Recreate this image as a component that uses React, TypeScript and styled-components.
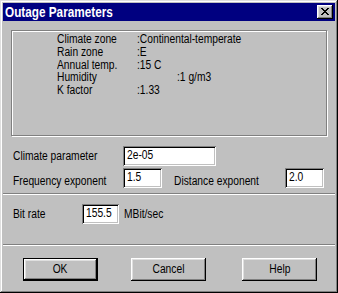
import React from "react";
import styled, { createGlobalStyle, css } from "styled-components";

const GlobalStyle = createGlobalStyle`
  html, body { margin: 0; padding: 0; background: #c0c0c0; }
  body {
    font-family: "Liberation Sans", Arial, sans-serif;
    font-size: 12.5px;
    color: #000;
  }
  * { box-sizing: border-box; }
`;

const narrow = css`
  display: inline-block;
  white-space: nowrap;
  transform: scaleX(0.82);
  transform-origin: 0 50%;
`;

const Window = styled.div`
  width: 338px;
  height: 293px;
  background: #c0c0c0;
  padding: 3px;
  display: flex;
  flex-direction: column;
  box-shadow: inset -1px -1px #000, inset 1px 1px #dfdfdf, inset -2px -2px #808080, inset 2px 2px #fff;
`;

const TitleBar = styled.div`
  height: 18px;
  background: #000080;
  display: flex;
  align-items: center;
  justify-content: space-between;
  padding: 0 2px 0 2px;
`;

const TitleText = styled.span`
  ${narrow};
  transform: scaleX(0.84);
  color: #fff;
  font-weight: bold;
  font-size: 14px;
  line-height: 18px;
`;

const CloseButton = styled.div`
  width: 16px;
  height: 14px;
  background: #c0c0c0;
  display: flex;
  align-items: center;
  justify-content: center;
  box-shadow: inset -1px -1px #000, inset 1px 1px #fff, inset -2px -2px #808080, inset 2px 2px #dfdfdf;
  padding-bottom: 1px;
`;

const GroupBox = styled.div`
  margin: 9px 0 0 8px;
  width: 316px;
  height: 106px;
  border: 1px solid #808080;
  box-shadow: inset 1px 1px #fff, 1px 1px #fff;
  padding: 2px 0 0 45px;
  display: grid;
  grid-template-columns: 80px auto;
  grid-auto-rows: 12.8px;
  line-height: 13px;
  align-content: start;
`;

const InfoLabel = styled.span`
  ${narrow};
`;

const InfoValue = styled.span<{ $indent?: number }>`
  ${narrow};
  margin-left: ${(p) => p.$indent ?? 0}px;
`;

const FieldRow = styled.div<{ $top: number }>`
  display: flex;
  align-items: flex-start;
  margin-top: ${(p) => p.$top}px;
  padding-left: 10px;
  height: 20px;
`;

const FieldLabel = styled.span<{ $width: number; $offset: number }>`
  width: ${(p) => p.$width}px;
  margin-top: ${(p) => p.$offset}px;
  line-height: 13px;
  flex: none;
`;

const LabelText = styled.span`
  ${narrow};
`;

const Unit = styled.span<{ $offset: number }>`
  ${narrow};
  margin-left: 5px;
  margin-top: ${(p) => p.$offset}px;
  line-height: 13px;
`;

const TextField = styled.div<{ $width: number }>`
  width: ${(p) => p.$width}px;
  height: 20px;
  background: #fff;
  flex: none;
  padding: 3px 0 0 4px;
  line-height: 13px;
  box-shadow: inset 1px 1px #808080, inset -1px -1px #fff, inset 2px 2px #000, inset -2px -2px #c0c0c0;
`;

const Spacer = styled.span<{ $w: number }>`
  width: ${(p) => p.$w}px;
  flex: none;
`;

const Separator = styled.div<{ $top: number }>`
  margin-top: ${(p) => p.$top}px;
  height: 2px;
  border-top: 1px solid #808080;
  border-bottom: 1px solid #fff;
`;

const ButtonRow = styled.div`
  display: flex;
  margin-top: 12px;
  padding-left: 20px;
`;

const Button = styled.div<{ $default?: boolean; $gap?: number }>`
  width: 75px;
  height: 23px;
  margin-left: ${(p) => p.$gap ?? 0}px;
  display: flex;
  align-items: center;
  justify-content: center;
  background: #c0c0c0;
  line-height: 13px;
  box-shadow: inset -1px -1px #000, inset 1px 1px #fff, inset -2px -2px #808080, inset 2px 2px #dfdfdf;
  ${(p) =>
    p.$default &&
    css`
      border: 1px solid #000;
    `}
`;

const ButtonText = styled.span`
  ${narrow};
  transform-origin: 50% 50%;
`;

const info: { label: string; value: string; indent?: number }[] = [
  { label: "Climate zone", value: ":Continental-temperate" },
  { label: "Rain zone", value: ":E" },
  { label: "Annual temp.", value: ":15 C" },
  { label: "Humidity", value: ":1 g/m3", indent: 40 },
  { label: "K factor", value: ":1.33" },
];

export default function App() {
  return (
    <>
      <GlobalStyle />
      <Window>
        <TitleBar>
          <TitleText>Outage Parameters</TitleText>
          <CloseButton>
            <svg width="8" height="7" viewBox="0 0 8 7" shapeRendering="crispEdges">
              <path
                d="M0 0h2v1h1v1h2v-1h1v-1h2v1h-1v1h-1v1h-1v1h1v1h1v1h1v1h-2v-1h-1v-1h-2v1h-1v1h-2v-1h1v-1h1v-1h1v-1h-1v-1h-1v-1h-1z"
                fill="#000"
              />
            </svg>
          </CloseButton>
        </TitleBar>
        <GroupBox>
          {info.map((r) => (
            <React.Fragment key={r.label}>
              <InfoLabel>{r.label}</InfoLabel>
              <span>
                <InfoValue $indent={r.indent}>{r.value}</InfoValue>
              </span>
            </React.Fragment>
          ))}
        </GroupBox>
        <FieldRow $top={10}>
          <FieldLabel $width={110} $offset={4}>
            <LabelText>Climate parameter</LabelText>
          </FieldLabel>
          <TextField $width={93}>
            <LabelText>2e-05</LabelText>
          </TextField>
        </FieldRow>
        <FieldRow $top={2}>
          <FieldLabel $width={110} $offset={7}>
            <LabelText>Frequency exponent</LabelText>
          </FieldLabel>
          <TextField $width={39}>
            <LabelText>1.5</LabelText>
          </TextField>
          <Spacer $w={12} />
          <FieldLabel $width={111} $offset={7}>
            <LabelText>Distance exponent</LabelText>
          </FieldLabel>
          <TextField $width={39}>
            <LabelText>2.0</LabelText>
          </TextField>
        </FieldRow>
        <Separator $top={5} />
        <FieldRow $top={9}>
          <FieldLabel $width={69} $offset={4}>
            <LabelText>Bit rate</LabelText>
          </FieldLabel>
          <TextField $width={37}>
            <LabelText>155.5</LabelText>
          </TextField>
          <Unit $offset={4}>MBit/sec</Unit>
        </FieldRow>
        <Separator $top={20} />
        <ButtonRow>
          <Button $default>
            <ButtonText>OK</ButtonText>
          </Button>
          <Button $gap={33}>
            <ButtonText>Cancel</ButtonText>
          </Button>
          <Button $gap={36}>
            <ButtonText>Help</ButtonText>
          </Button>
        </ButtonRow>
      </Window>
    </>
  );
}
